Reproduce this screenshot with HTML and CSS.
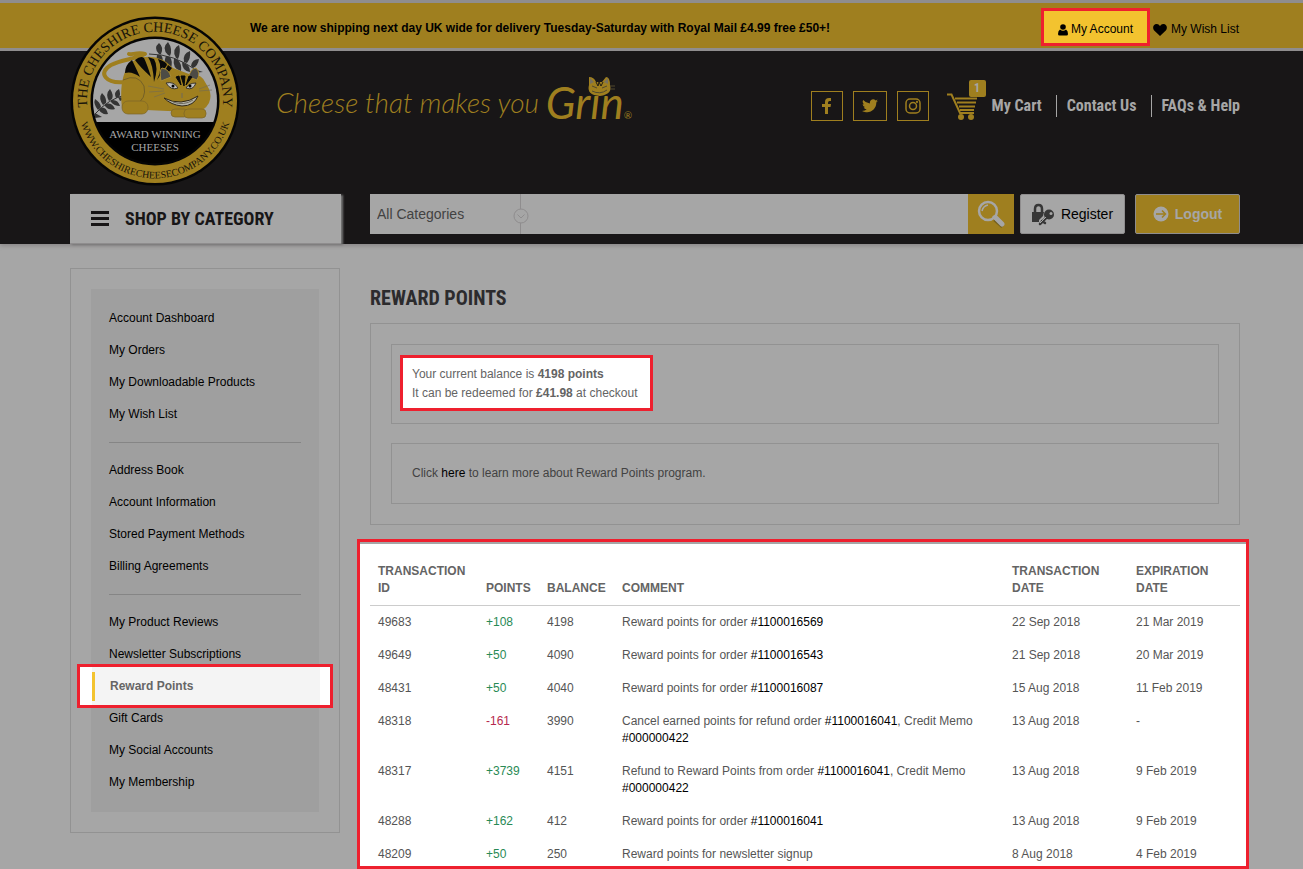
FILE: index.html
```html
<!DOCTYPE html>
<html lang="en">
<head>
<meta charset="utf-8">
<title>Reward Points - The Cheshire Cheese Company</title>
<link rel="stylesheet" href="styles.css">
</head>
<body>
<header class="site-header">
  <div class="topbar">
    <div class="container topbar-inner">
      <p class="shipping">We are now shipping next day UK wide for delivery Tuesday-Saturday with Royal Mail £4.99 free £50+!</p>
      <a class="account-link" href="#"><svg width="10" height="12" viewBox="0 0 10 12" aria-hidden="true"><circle cx="5" cy="3" r="2.8"/><path d="M2 5.500Q5 8 8 5.500Q10 6.500 10 10Q10 11.500 8.500 11.500H1.500Q0 11.500 0 10Q0 6.500 2 5.500Z"/></svg><span>My Account</span></a>
      <a class="wish-link" href="#"><svg width="14" height="12" viewBox="0 0 14 12" aria-hidden="true"><path d="M7 12L1.200 6.500C-.8 4.300 0 .3 3.600.1 5.500 0 6.500 1.300 7 2.200 7.500 1.300 8.500 0 10.400.1 14 .3 14.800 4.300 12.800 6.500Z"/></svg><span>My Wish List</span></a>
    </div>
  </div>
  <div class="container">
    <a class="logo" href="#" aria-label="The Cheshire Cheese Company">
      <svg width="170" height="170" viewBox="0 0 170 170">
        <defs>
          <path id="arc-top" d="M17.500 92A68 68 0 1 1 152.500 92"/>
          <path id="arc-bottom" d="M9 100A77.500 77.500 0 0 0 161 100"/>
          <clipPath id="disc"><circle cx="85" cy="85" r="62"/></clipPath>
        </defs>
        <circle cx="85" cy="85" r="84.500" fill="#050505"/>
        <circle cx="85" cy="85" r="82" fill="#9f7f1f"/>
        <circle cx="85" cy="85" r="64.500" fill="#050505"/>
        <g clip-path="url(#disc)">
          <rect x="20" y="20" width="130" height="86" fill="#a6a6a6"/>
          <rect x="20" y="106" width="130" height="50" fill="#000"/>
        </g>
        <g fill="none" stroke="#343434" stroke-width="1">
          <path d="M79 38Q104 38 126 54M24 99Q39 82 56 79"/>
        </g>
        <g fill="#343434">
          <path d="M89 38Q83 32 89 27Q94 31 91 38ZM98 39Q91 32 98 26Q103 33 100 40ZM106 42Q101 33 109 29Q111 36 108 43ZM114 46Q112 38 120 35Q121 42 117 47ZM121 50Q122 43 129 43Q128 50 123 52ZM87 39Q85 46 92 48Q94 43 91 39ZM96 40Q92 49 101 52Q103 45 100 41ZM104 42Q102 53 111 55Q112 48 108 44ZM112 46Q112 55 120 56Q120 50 116 48ZM124 53L133 56L123 57Z"/>
          <path d="M28 94Q23 88 25 83Q30 86 31 91ZM33 89Q28 82 32 77Q37 82 36 87ZM39 85Q35 78 40 73Q44 79 42 83ZM46 82Q43 76 49 73Q51 78 49 81ZM30 92Q36 90 38 98Q32 99 29 94ZM35 88Q42 86 45 93Q39 95 35 90ZM41 84Q48 83 50 90Q44 90 41 86ZM48 81L56 82L50 85ZM25 97L32 101L25 102Z"/>
        </g>
        <path d="M55 66C36 68 27 57 41 49C53 43 63 44 75 38C68 36 61 39 59 38" fill="none" stroke="#9f7f1f" stroke-width="4" stroke-linecap="round" stroke-linejoin="round"/>
        <path d="M52 91C50 73 51 47 70 42Q89 37 103 52L127 61Q145 72 139 87Q133 98 120 96L76 94Z" fill="#9f7f1f"/>
        <path d="M53 64Q68 57 74 70Q77 83 65 89" fill="none" stroke="#746027" stroke-width="1"/>
        <g fill="#090909">
          <path d="M55 57Q55 49 62 44Q65 50 70 61Q62 55 55 57ZM65 44Q71 39 74 42Q77 48 81 61Q70 51 65 44ZM78 41L84 43Q89 51 84 66Q83 48 78 41ZM88 43Q97 46 97 49L87 64Q93 52 88 43ZM98 49L102 52 91 66Q92 60 98 49Z"/>
        </g>
        <path d="M89 71Q87 61 94 58Q104 60 118 60Q130 56 135 66Q144 80 132 91Q116 100 99 91Q87 83 89 71Z" fill="#9f7f1f"/>
        <path d="M91 65Q89 54 92 52Q99 53 101 61Z" fill="#4d4b45" stroke="#a98b31"/><path d="M119 61Q120 53 126 52Q131 57 127 64Z" fill="#4d4b45" stroke="#a98b31"/>
        <path d="M106 61L111 69 109 60ZM111 60L114 70 115 60ZM119 60L116 69 122 61Z" fill="#090909" stroke="#090909"/>
        <path d="M96 67Q104 65 108 72Q101 75 96 67ZM116 72Q119 67 126 67Q123 75 116 72Z" fill="#c0c0c0" stroke="#3a3527" stroke-width="1"/>
        <circle cx="103" cy="70" r="1.500"/><circle cx="120" cy="70" r="1.500"/>
        <path d="M94 82Q111 91 128 80Q124 90 112 90Q101 89 94 82Z" fill="#b3b3a9" stroke="#302818" stroke-width="1"/>
        <path d="M103 86Q114 90 123 84M112 77V82" fill="none" stroke="#6e6a5d" stroke-width="1"/>
        <path d="M94 73L78 70M94 75L79 76M95 77L84 81M129 73L140 69M129 75L142 74" stroke="#716a55" stroke-width=".6"/>
        <g fill="#9f7f1f" stroke="#7d6628" stroke-width=".7"><rect x="52" y="85" width="26" height="13" rx="6"/><rect x="101" y="93" width="17" height="8" rx="4"/><rect x="114" y="93" width="22" height="9" rx="4"/></g>
        <text class="ring-text ring-name"><textPath href="#arc-top" startOffset="50%" text-anchor="middle">THE CHESHIRE CHEESE COMPANY</textPath></text>
        <text class="ring-text ring-url"><textPath href="#arc-bottom" startOffset="50%" text-anchor="middle">WWW.CHESHIRECHEESECOMPANY.CO.UK</textPath></text>
        <text class="award-text" x="85" y="122" text-anchor="middle">AWARD WINNING</text>
        <text class="award-text" x="85" y="135" text-anchor="middle">CHEESES</text>
      </svg>
    </a>
    <div class="brand-row">
      <p class="tagline"><span class="tag-small">Cheese that makes you</span> <span class="grin">Grin<span class="reg">®</span>
        <svg class="mini-cat" width="30" height="22" viewBox="0 0 30 22" aria-hidden="true"><path d="M3 9L3 1Q8 1 10 6H16L20 1Q24 1 24 9Q27 18 14 20Q0 19 3 9Z" fill="#9f7f1f"/><path d="M4 8V2L8 6ZM22 8V2L18 6Z" fill="#77705f"/><path d="M10 6L12 10 13 6 15 10 17 6" fill="none" stroke="#221d12" stroke-width="1"/><path d="M6 10L11 12M21 10L16 12M6 15Q14 19 21 14M24 10H29M24 13H29" fill="none" stroke="#52492f" stroke-width="1"/></svg></span></p>
      <nav class="social" aria-label="Social media">
        <a href="#" aria-label="Facebook"><svg width="10" height="18" viewBox="0 0 10 18"><path d="M3 17V10H0V7H3V5Q3 1 7 1H9V4H7.500Q6 4 6 5.500V7H9L8.500 10H6V17Z"/></svg></a>
        <a class="wide" href="#" aria-label="Twitter"><svg width="16" height="14" viewBox="0 0 16 14"><path d="M16 1.800L14.300 3.500C14.500 9.500 9.500 14 4 13.200Q1.500 13 0 12 3 12 4.700 10.600 2.300 10.300 1.700 8.300H3.200Q.6 7.400.6 5L2 5.400Q-.2 3.500 1.200 1 4 4.300 7.900 4.400C7.300 1 11.300-1 13.600 1.400L15.600.6 14.300 2.400Z"/></svg></a>
        <a href="#" aria-label="Instagram"><svg width="16" height="16" viewBox="0 0 16 16" fill="none" stroke="#9f7f1f" stroke-width="1.500"><rect x="1" y="1" width="14" height="14" rx="4"/><circle cx="8" cy="8" r="3.500"/><circle cx="12" cy="4" r=".4"/></svg></a>
      </nav>
      <nav class="links" aria-label="Shop">
        <a class="cart" href="#"><span class="cart-icon"><svg width="30" height="27" viewBox="0 0 30 27" aria-hidden="true"><path d="M0 1.500H4.500L13 20H27" fill="none" stroke="#9f7f1f" stroke-width="2"/><path d="M8 5.500H30M10 9.500H29M12 13.500H28M13 17H27" stroke="#9f7f1f" stroke-width="2"/><circle cx="14" cy="24" r="3"/><circle cx="24" cy="24" r="3"/></svg><span class="badge">1</span></span><span>My Cart</span></a>
        <a href="#">Contact Us</a>
        <a href="#">FAQs &amp; Help</a>
      </nav>
    </div>
    <div class="tool-row">
      <button class="shop" type="button"><svg width="18" height="15" viewBox="0 0 18 15" aria-hidden="true"><path d="M0 1.500H18M0 7.500H18M0 13.500H18" stroke="#181617" stroke-width="3"/></svg><span>SHOP BY CATEGORY</span></button>
      <form class="search">
        <div class="select-wrap">
          <select aria-label="Category"><option>All Categories</option></select>
          <svg class="chevron" width="16" height="16" viewBox="0 0 16 16" aria-hidden="true"><circle cx="8" cy="8" r="7" fill="#a6a6a6" stroke="#8f8d8e"/><path d="M4.500 6.500L8 10 11.500 6.500" fill="none" stroke="#8f8d8e"/></svg>
        </div>
        <input type="text" aria-label="Search products">
        <button type="submit" aria-label="Search"><svg width="28" height="28" viewBox="0 0 28 28"><path d="M18 19L26 26" stroke="#74601f" stroke-width="5"/><path d="M19 18L25 24" stroke="#a6a6a6" stroke-width="5" stroke-linecap="round"/><path d="M16 16L20 20" stroke="#a6a6a6" stroke-width="3"/><circle cx="11" cy="11" r="9" fill="none" stroke="#a6a6a6" stroke-width="2.500"/><path d="M5 11Q6 6 11 5" fill="none" stroke="#a6a6a6" stroke-width="1.500"/></svg></button>
      </form>
      <a class="btn register" href="#"><svg width="23" height="23" viewBox="0 0 23 23" aria-hidden="true"><path d="M3 10V6Q3 2 6.500 2Q10 2 10 6V10" fill="none" stroke="#373737" stroke-width="2.500"/><path d="M0 9H12L11 13 7 17V19H0Z" fill="#373737"/><circle cx="17" cy="11.500" r="5" fill="#373737"/><circle cx="19" cy="10.500" r="1.500" fill="#a6a6a6"/><path d="M15 14L8 21M10 18L13 20" stroke="#373737" stroke-width="2.500" stroke-linecap="round"/><path d="M14 14L8 20" stroke="#a6a6a6" stroke-width="1"/></svg><span>Register</span></a>
      <a class="btn logout" href="#"><svg width="16" height="16" viewBox="0 0 16 16" aria-hidden="true"><circle cx="8" cy="8" r="7.500" fill="#a6a6a6"/><path d="M3 8H12M9 4.500L12.500 8 9 11.500" fill="none" stroke="#9f7f1f" stroke-width="1.500"/></svg><span>Logout</span></a>
    </div>
  </div>
</header>

<main class="container page">
  <aside class="sidebar">
    <nav class="side-nav" aria-label="My account">
      <ul>
        <li><a href="#">Account Dashboard</a></li>
        <li><a href="#">My Orders</a></li>
        <li><a href="#">My Downloadable Products</a></li>
        <li><a href="#">My Wish List</a></li>
      </ul>
      <ul>
        <li><a href="#">Address Book</a></li>
        <li><a href="#">Account Information</a></li>
        <li><a href="#">Stored Payment Methods</a></li>
        <li><a href="#">Billing Agreements</a></li>
      </ul>
      <ul>
        <li><a href="#">My Product Reviews</a></li>
        <li><a href="#">Newsletter Subscriptions</a></li>
        <li class="current"><a href="#" aria-current="page">Reward Points</a></li>
        <li><a href="#">Gift Cards</a></li>
        <li><a href="#">My Social Accounts</a></li>
        <li><a href="#">My Membership</a></li>
      </ul>
    </nav>
  </aside>
  <section class="content">
    <h1>REWARD POINTS</h1>
    <div class="panel">
      <div class="box"><p class="balance">Your current balance is <b>4198 points</b><br>It can be redeemed for <b>£41.98</b> at checkout</p></div>
      <div class="box"><p>Click <a href="#">here</a> to learn more about Reward Points program.</p></div>
    </div>
    <div class="history">
      <table>
        <colgroup><col class="c-id"><col class="c-points"><col class="c-balance"><col><col class="c-date"><col class="c-expiry"></colgroup>
        <thead><tr><th>TRANSACTION ID</th><th>POINTS</th><th>BALANCE</th><th>COMMENT</th><th>TRANSACTION DATE</th><th>EXPIRATION DATE</th></tr></thead>
        <tbody>
          <tr><td>49683</td><td class="plus">+108</td><td>4198</td><td>Reward points for order <a href="#">#1100016569</a></td><td>22 Sep 2018</td><td>21 Mar 2019</td></tr>
          <tr><td>49649</td><td class="plus">+50</td><td>4090</td><td>Reward points for order <a href="#">#1100016543</a></td><td>21 Sep 2018</td><td>20 Mar 2019</td></tr>
          <tr><td>48431</td><td class="plus">+50</td><td>4040</td><td>Reward points for order <a href="#">#1100016087</a></td><td>15 Aug 2018</td><td>11 Feb 2019</td></tr>
          <tr><td>48318</td><td class="minus">-161</td><td>3990</td><td>Cancel earned points for refund order <a href="#">#1100016041</a>, Credit Memo <a href="#">#000000422</a></td><td>13 Aug 2018</td><td>-</td></tr>
          <tr><td>48317</td><td class="plus">+3739</td><td>4151</td><td>Refund to Reward Points from order <a href="#">#1100016041</a>, Credit Memo <a href="#">#000000422</a></td><td>13 Aug 2018</td><td>9 Feb 2019</td></tr>
          <tr><td>48288</td><td class="plus">+162</td><td>412</td><td>Reward points for order <a href="#">#1100016041</a></td><td>13 Aug 2018</td><td>9 Feb 2019</td></tr>
          <tr><td>48209</td><td class="plus">+50</td><td>250</td><td>Reward points for newsletter signup</td><td>8 Aug 2018</td><td>4 Feb 2019</td></tr>
        </tbody>
      </table>
    </div>
  </section>
</main>
</body>
</html>
```

FILE: styles.css
```css
:root {
  --gold: #9f7f1f;
  --gold-bright: #f3c32f;
  --ink: #181617;
  --grey: #a6a6a6;
  --line: #929292;
  --red: #ee202e;
  --condensed: "Roboto Condensed", "Liberation Sans Narrow", "Liberation Sans", sans-serif;
}
* { box-sizing: border-box; }
body { margin: 0; background: var(--grey); color: #424242; font: 12px/19px "Liberation Sans", Arial, sans-serif; }
a { color: #000; text-decoration: none; }
p, h1, ul { margin: 0; padding: 0; }
ul { list-style: none; }
svg { display: block; flex: none; }
button, input, select { margin: 0; padding: 0; border: 0; border-radius: 0; font: inherit; color: inherit; background: none; }
.container { margin: 0 63px 0 70px; position: relative; }

.site-header { background: var(--ink); box-shadow: 0 2px 4px #8a8788; position: relative; }
.topbar { background: var(--gold); border-top: 3px solid #8f8d8e; border-bottom: 3px solid #8f8d8e; }
.topbar-inner { display: flex; align-items: center; height: 45px; padding: 0 1px 0 180px; color: #000; }
.shipping { flex: 1; padding-top: 5px; font-weight: bold; }
.account-link, .wish-link { display: flex; align-items: center; }
.account-link { gap: 3px; height: 38px; margin-top: 2px; padding: 6px 14px 0; border: 3px solid var(--red); background: var(--gold-bright); }
.wish-link { gap: 4px; padding: 8px 0 0 3px; }

.logo { position: absolute; left: 0; top: -35px; }
.ring-text, .award-text { font-family: "Liberation Serif", serif; }
.ring-text { fill: #17130a; }
.ring-name { font-size: 14px; }
.ring-url { font-size: 10px; }
.award-text { font-size: 11px; fill: #a6a6a6; }

.brand-row { display: flex; align-items: center; height: 143px; padding: 0 0 33px 206px; }
.tagline { flex: 1; padding-top: 4px; color: var(--gold); white-space: nowrap; font-family: "Bradley Hand", Lato, sans-serif; font-style: italic; line-height: 48px; }
.tag-small { font-size: 28px; font-weight: 300; vertical-align: 6px; }
.grin { position: relative; font-size: 44px; margin-left: 4px; }
.reg { font-size: 10px; }
.mini-cat { position: absolute; left: 40px; top: 0; }
.social { display: flex; gap: 10px; margin-right: 18px; }
.social a { display: flex; align-items: center; justify-content: center; width: 32px; height: 30px; border: 1px solid var(--gold); fill: var(--gold); }
.social .wide { width: 34px; }
.links { display: flex; align-items: center; font: bold 16px/22px var(--condensed); }
.links a { color: var(--grey); }
.links a + a { border-left: 1px solid var(--grey); margin-left: 14px; padding-left: 10px; }
.cart { display: flex; align-items: center; gap: 15px; }
.cart-icon { position: relative; fill: var(--gold); }
.badge { position: absolute; right: -9px; top: -13px; width: 17px; height: 17px; border-radius: 2px; background: var(--gold); font-size: 12px; line-height: 17px; text-align: center; }

.tool-row { display: flex; align-items: flex-start; }
.shop { display: flex; align-items: center; gap: 16px; width: 271px; height: 50px; padding: 0 21px; margin-right: 29px; background: var(--grey); border-bottom: 1px solid #8f8d8e; box-shadow: 2px 1px 2px #777; color: var(--ink); font: bold 18px/24px var(--condensed); white-space: nowrap; }
.search { display: flex; flex: 1; height: 40px; margin-right: 6px; background: var(--grey); font-size: 14px; }
.select-wrap { position: relative; width: 151px; border-right: 1px solid #8f8d8e; }
.select-wrap select { appearance: none; width: 100%; height: 40px; padding: 0 20px 0 7px; }
.chevron { position: absolute; right: -9px; top: 14px; }
.search input { flex: 1; min-width: 0; padding: 0 16px; }
.search button { display: flex; align-items: center; justify-content: center; width: 46px; background: var(--gold); }
.btn { display: flex; align-items: center; justify-content: center; gap: 6px; width: 105px; height: 40px; border: 1px solid #8f8d8e; border-radius: 2px; background: var(--grey); font-size: 14px; }
.logout { margin-left: 10px; background: var(--gold); color: var(--grey); font-weight: bold; }

.page { display: flex; gap: 30px; align-items: flex-start; padding-top: 24px; }
.sidebar { flex: none; width: 270px; padding: 20px; border: 1px solid var(--line); }
.side-nav { padding: 13px 0 14px; background: #9f9f9f; }
.side-nav ul + ul::before { content: ""; display: block; height: 1px; margin: 12px 18px 11px; background: #858585; }
.side-nav a { display: block; padding: 0 18px; line-height: 32px; position: relative; }
.current { position: relative; }
.current::before { content: ""; position: absolute; inset: -6px -14px; border: 3px solid var(--red); background: linear-gradient(90deg, #fff 12px, #f4f4f4 12px, #f4f4f4 240px, #fff 240px); }
.current::after { content: ""; position: absolute; left: 1px; top: 2px; width: 3px; height: 29px; background: var(--gold-bright); }
.side-nav .current a { color: #666; font-weight: bold; z-index: 1; padding-left: 19px; }

.content { flex: 1; min-width: 0; }
h1 { margin: 18px 0 13px; color: #2c2b2d; font: bold 20px/24px var(--condensed); }
.panel { display: grid; gap: 19px; padding: 20px; border: 1px solid var(--line); }
.box { padding: 20px; border: 1px solid var(--line); }
.balance { position: relative; z-index: 0; width: fit-content; color: #646464; }
.balance::before { content: ""; position: absolute; z-index: -1; inset: -10px -15px -8px -12px; border: 3px solid var(--red); background: #fff; }
.history { position: relative; z-index: 0; margin-top: 30px; color: #555; }
.history::before { content: ""; position: absolute; z-index: -1; inset: -16px -9px 0 -13px; border: 3px solid var(--red); background: linear-gradient(var(--grey) 2px, #fff 2px); }
table { width: 100%; table-layout: fixed; border-collapse: separate; border-spacing: 0; line-height: 17px; }
.c-id { width: 108px; }
.c-points { width: 61px; }
.c-balance { width: 75px; }
.c-date { width: 124px; }
.c-expiry { width: 112px; }
th, td { padding: 8px; text-align: left; vertical-align: top; }
th { vertical-align: bottom; border-bottom: 1px solid #ccc; color: #646464; }
tbody tr:last-child td { padding-bottom: 6px; }
.plus { color: #298a55; }
.minus { color: #b5284d; }
```
